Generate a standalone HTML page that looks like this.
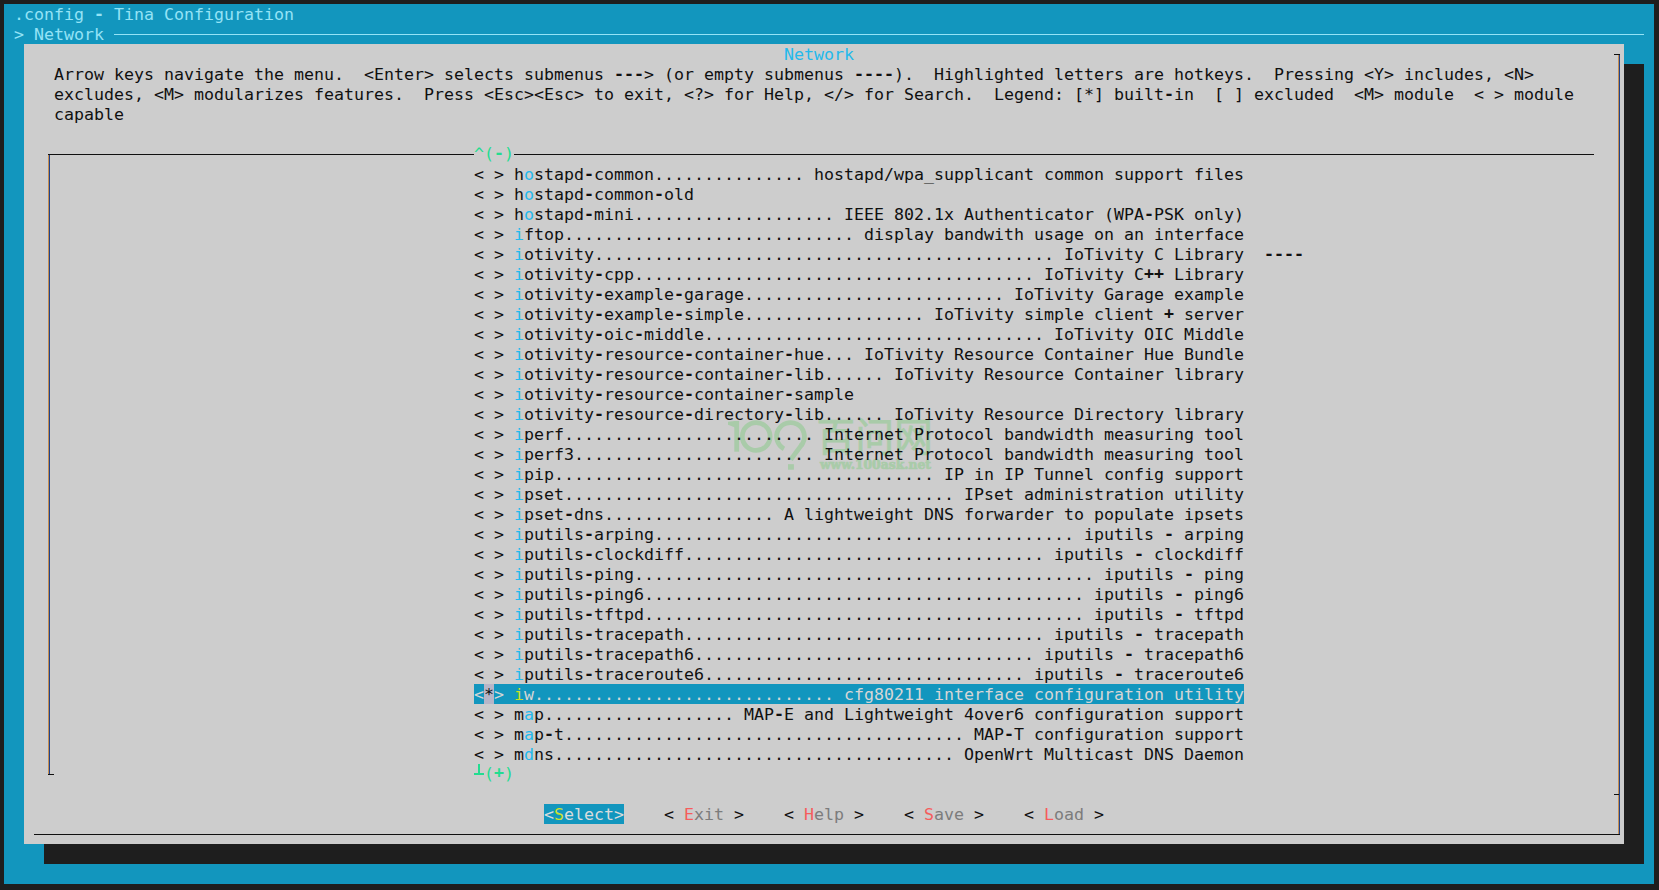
<!DOCTYPE html>
<html lang="en"><head><meta charset="utf-8"><title>.config - Tina Configuration</title>
<style>
html,body{margin:0;padding:0}
body{width:1659px;height:890px;background:#1e1e1e;overflow:hidden;position:relative}
.b{position:absolute}
.h{position:relative;top:-1px}
.t{position:absolute;height:20px;font:16.61px/20px "DejaVu Sans Mono","Liberation Mono",monospace;white-space:pre;color:#101010;letter-spacing:0}
</style></head><body>
<div class="b" style="left:4px;top:4px;width:1650px;height:880px;background:#1296be;"></div>
<div class="b" style="left:44px;top:64px;width:1600px;height:800px;background:#1e1e1e;"></div>
<div class="b" style="left:24px;top:44px;width:1600px;height:800px;background:#cdcdcd;"></div>
<svg class="b" style="left:720px;top:410px" width="230" height="70" viewBox="720 410 230 70" fill="none" stroke="#a9cba9" stroke-width="4.8">
<line x1="736.7" y1="421" x2="736.7" y2="451.7"/>
<polygon points="728,421.7 735,421 735,427.6 728,424.7" fill="#a9cba9" stroke="none"/>
<circle cx="756.2" cy="436.5" r="13.9"/>
<circle cx="790.5" cy="436.5" r="13.9" stroke-dasharray="67.9 100" transform="rotate(118 790.5 436.5)"/>
<circle cx="801.45" cy="445.06" r="2.4" fill="#a9cba9" stroke="none"/>
<line x1="801.45" y1="445.06" x2="790.7" y2="459.6"/>
<rect x="788" y="464.2" width="5.9" height="5.5" fill="#a9cba9" stroke="none"/>
<text x="816.6" y="450.6" font-family="'Noto Sans CJK SC','WenQuanYi Zen Hei',sans-serif" font-weight="400" font-size="38.5" letter-spacing="0.3" fill="#a9cba9" stroke="#a9cba9" stroke-width="0.8">百问网</text>
<text x="820" y="469.4" font-family="'DejaVu Serif','Liberation Serif',serif" font-weight="bold" font-size="12.5" fill="#a9cba9" stroke="#a9cba9" stroke-width="0.7" textLength="111" lengthAdjust="spacingAndGlyphs">www.100ask.net</text>
</svg>
<div class="t" style="left:14px;top:5px"><span style="color:#94e3f6">.config <b class="h">-</b> Tina Configuration</span></div>
<div class="t" style="left:14px;top:25px"><span style="color:#94e3f6">&gt; Network</span></div>
<div class="b" style="left:114px;top:34px;width:1530px;height:1px;background:#94e3f6;"></div>
<div class="t" style="left:784px;top:45px"><span style="color:#23b9ec">Network</span></div>
<div class="t" style="left:54px;top:65px">Arrow keys navigate the menu.  &lt;Enter&gt; selects submenus <b class="h">---</b>&gt; (or empty submenus <b class="h">----</b>).  Highlighted letters are hotkeys.  Pressing &lt;Y&gt; includes, &lt;N&gt;</div>
<div class="t" style="left:54px;top:85px">excludes, &lt;M&gt; modularizes features.  Press &lt;Esc&gt;&lt;Esc&gt; to exit, &lt;?&gt; for Help, &lt;/&gt; for Search.  Legend: [*] built<b class="h">-</b>in  [ ] excluded  &lt;M&gt; module  &lt; &gt; module</div>
<div class="t" style="left:54px;top:105px">capable</div>
<div class="b" style="left:1618px;top:55px;width:1px;height:779px;background:#c48e50;"></div>
<div class="b" style="left:1619px;top:55px;width:1px;height:779px;background:#22428a;"></div>
<div class="b" style="left:1614px;top:54px;width:6px;height:1px;background:#101010;"></div>
<div class="b" style="left:34px;top:834px;width:1586px;height:1px;background:#101010;"></div>
<div class="b" style="left:1614px;top:794px;width:5px;height:1px;background:#101010;"></div>
<div class="b" style="left:48px;top:155px;width:1px;height:619px;background:#c48e50;"></div>
<div class="b" style="left:49px;top:155px;width:1px;height:619px;background:#22428a;"></div>
<div class="b" style="left:48px;top:154px;width:426px;height:1px;background:#101010;"></div>
<div class="b" style="left:514px;top:154px;width:1080px;height:1px;background:#101010;"></div>
<div class="b" style="left:48px;top:774px;width:6px;height:1px;background:#101010;"></div>
<div class="t" style="left:474px;top:144px"><span style="color:#23dc90">^(<b class="h">-</b>)</span></div>
<div class="t" style="left:484px;top:764px"><span style="color:#23dc90">(<b class="h">+</b>)</span></div>
<div class="t" style="left:474px;top:764px;color:transparent">┴</div>
<div class="b" style="left:474px;top:773px;width:10px;height:2px;background:#23dc90;"></div>
<div class="b" style="left:478px;top:764px;width:2px;height:10px;background:#23dc90;"></div>
<div class="t" style="left:474px;top:165px">&lt; &gt; h<span style="color:#23b9ec">o</span>stapd<b class="h">-</b>common............... hostapd/wpa_supplicant common support files</div>
<div class="t" style="left:474px;top:185px">&lt; &gt; h<span style="color:#23b9ec">o</span>stapd<b class="h">-</b>common<b class="h">-</b>old</div>
<div class="t" style="left:474px;top:205px">&lt; &gt; h<span style="color:#23b9ec">o</span>stapd<b class="h">-</b>mini.................... IEEE 802.1x Authenticator (WPA<b class="h">-</b>PSK only)</div>
<div class="t" style="left:474px;top:225px">&lt; &gt; <span style="color:#23b9ec">i</span>ftop............................. display bandwith usage on an interface</div>
<div class="t" style="left:474px;top:245px">&lt; &gt; <span style="color:#23b9ec">i</span>otivity.............................................. IoTivity C Library  <b class="h">----</b></div>
<div class="t" style="left:474px;top:265px">&lt; &gt; <span style="color:#23b9ec">i</span>otivity<b class="h">-</b>cpp........................................ IoTivity C<b class="h">++</b> Library</div>
<div class="t" style="left:474px;top:285px">&lt; &gt; <span style="color:#23b9ec">i</span>otivity<b class="h">-</b>example<b class="h">-</b>garage.......................... IoTivity Garage example</div>
<div class="t" style="left:474px;top:305px">&lt; &gt; <span style="color:#23b9ec">i</span>otivity<b class="h">-</b>example<b class="h">-</b>simple.................. IoTivity simple client <b class="h">+</b> server</div>
<div class="t" style="left:474px;top:325px">&lt; &gt; <span style="color:#23b9ec">i</span>otivity<b class="h">-</b>oic<b class="h">-</b>middle.................................. IoTivity OIC Middle</div>
<div class="t" style="left:474px;top:345px">&lt; &gt; <span style="color:#23b9ec">i</span>otivity<b class="h">-</b>resource<b class="h">-</b>container<b class="h">-</b>hue... IoTivity Resource Container Hue Bundle</div>
<div class="t" style="left:474px;top:365px">&lt; &gt; <span style="color:#23b9ec">i</span>otivity<b class="h">-</b>resource<b class="h">-</b>container<b class="h">-</b>lib...... IoTivity Resource Container library</div>
<div class="t" style="left:474px;top:385px">&lt; &gt; <span style="color:#23b9ec">i</span>otivity<b class="h">-</b>resource<b class="h">-</b>container<b class="h">-</b>sample</div>
<div class="t" style="left:474px;top:405px">&lt; &gt; <span style="color:#23b9ec">i</span>otivity<b class="h">-</b>resource<b class="h">-</b>directory<b class="h">-</b>lib...... IoTivity Resource Directory library</div>
<div class="t" style="left:474px;top:425px">&lt; &gt; <span style="color:#23b9ec">i</span>perf......................... Internet Protocol bandwidth measuring tool</div>
<div class="t" style="left:474px;top:445px">&lt; &gt; <span style="color:#23b9ec">i</span>perf3........................ Internet Protocol bandwidth measuring tool</div>
<div class="t" style="left:474px;top:465px">&lt; &gt; <span style="color:#23b9ec">i</span>pip...................................... IP in IP Tunnel config support</div>
<div class="t" style="left:474px;top:485px">&lt; &gt; <span style="color:#23b9ec">i</span>pset....................................... IPset administration utility</div>
<div class="t" style="left:474px;top:505px">&lt; &gt; <span style="color:#23b9ec">i</span>pset<b class="h">-</b>dns................. A lightweight DNS forwarder to populate ipsets</div>
<div class="t" style="left:474px;top:525px">&lt; &gt; <span style="color:#23b9ec">i</span>putils<b class="h">-</b>arping.......................................... iputils <b class="h">-</b> arping</div>
<div class="t" style="left:474px;top:545px">&lt; &gt; <span style="color:#23b9ec">i</span>putils<b class="h">-</b>clockdiff.................................... iputils <b class="h">-</b> clockdiff</div>
<div class="t" style="left:474px;top:565px">&lt; &gt; <span style="color:#23b9ec">i</span>putils<b class="h">-</b>ping.............................................. iputils <b class="h">-</b> ping</div>
<div class="t" style="left:474px;top:585px">&lt; &gt; <span style="color:#23b9ec">i</span>putils<b class="h">-</b>ping6............................................ iputils <b class="h">-</b> ping6</div>
<div class="t" style="left:474px;top:605px">&lt; &gt; <span style="color:#23b9ec">i</span>putils<b class="h">-</b>tftpd............................................ iputils <b class="h">-</b> tftpd</div>
<div class="t" style="left:474px;top:625px">&lt; &gt; <span style="color:#23b9ec">i</span>putils<b class="h">-</b>tracepath.................................... iputils <b class="h">-</b> tracepath</div>
<div class="t" style="left:474px;top:645px">&lt; &gt; <span style="color:#23b9ec">i</span>putils<b class="h">-</b>tracepath6.................................. iputils <b class="h">-</b> tracepath6</div>
<div class="t" style="left:474px;top:665px">&lt; &gt; <span style="color:#23b9ec">i</span>putils<b class="h">-</b>traceroute6................................ iputils <b class="h">-</b> traceroute6</div>
<div class="b" style="left:474px;top:684px;width:770px;height:20px;background:#1296be;"></div>
<div class="b" style="left:484px;top:684px;width:10px;height:20px;background:#b6b6c8;"></div>
<div class="t" style="left:474px;top:685px"><span style="color:#d6d6d6">&lt;</span><span style="color:#101010">*</span><span style="color:#d6d6d6">&gt; </span><span style="color:#d6d6d6"></span><span style="color:#c6e024">i</span><span style="color:#d6d6d6">w.............................. cfg80211 interface configuration utility</span></div>
<div class="t" style="left:474px;top:705px">&lt; &gt; m<span style="color:#23b9ec">a</span>p................... MAP<b class="h">-</b>E and Lightweight 4over6 configuration support</div>
<div class="t" style="left:474px;top:725px">&lt; &gt; m<span style="color:#23b9ec">a</span>p<b class="h">-</b>t........................................ MAP<b class="h">-</b>T configuration support</div>
<div class="t" style="left:474px;top:745px">&lt; &gt; m<span style="color:#23b9ec">d</span>ns........................................ OpenWrt Multicast DNS Daemon</div>
<div class="b" style="left:544px;top:804px;width:80px;height:20px;background:#1296be;"></div>
<div class="t" style="left:544px;top:805px"><span style="color:#dadcdc">&lt;</span><span style="color:#cde02e">S</span><span style="color:#dadcdc">elect&gt;</span></div>
<div class="t" style="left:664px;top:805px">&lt; <span style="color:#f65c5c">E</span><span style="color:#7c7c7c">xit</span> &gt;</div>
<div class="t" style="left:784px;top:805px">&lt; <span style="color:#f65c5c">H</span><span style="color:#7c7c7c">elp</span> &gt;</div>
<div class="t" style="left:904px;top:805px">&lt; <span style="color:#f65c5c">S</span><span style="color:#7c7c7c">ave</span> &gt;</div>
<div class="t" style="left:1024px;top:805px">&lt; <span style="color:#f65c5c">L</span><span style="color:#7c7c7c">oad</span> &gt;</div>
</body></html>
